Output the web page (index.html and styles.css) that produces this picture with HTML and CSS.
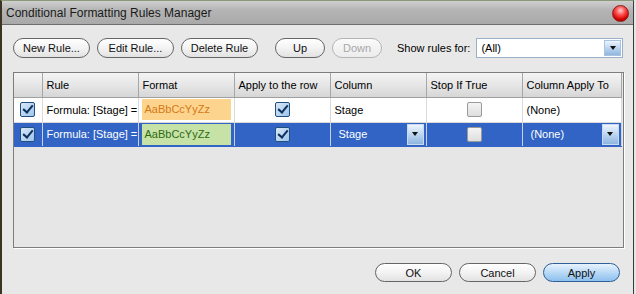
FILE: index.html
```html
<!DOCTYPE html>
<html lang="en">
<head>
  <meta charset="UTF-8">
  <title>Conditional Formatting Rules Manager</title>
  <link rel="stylesheet" href="styles.css">
</head>
<body>
  <div class="window">
    <div class="titlebar">
      <span class="title">Conditional Formatting Rules Manager</span>
      <span class="close"></span>
    </div>

    <div class="content">
      <!-- top toolbar -->
      <div class="toolbar">
        <button class="btn">New Rule...</button>
        <button class="btn">Edit Rule...</button>
        <button class="btn">Delete Rule</button>
        <button class="btn btn-small up">Up</button>
        <button class="btn btn-small disabled">Down</button>
        <span class="show-label">Show rules for:</span>
        <div class="select">
          <span class="select-text">(All)</span>
          <span class="drop"><i></i></span>
        </div>
      </div>

      <!-- rules grid -->
      <div class="grid-wrap">
        <table class="grid">
          <colgroup>
            <col style="width:28px">
            <col style="width:96px">
            <col style="width:96px">
            <col style="width:96px">
            <col style="width:96px">
            <col style="width:96px">
            <col style="width:99px">
          </colgroup>
          <thead>
            <tr>
              <th></th>
              <th>Rule</th>
              <th>Format</th>
              <th>Apply to the row</th>
              <th>Column</th>
              <th>Stop If True</th>
              <th>Column Apply To</th>
            </tr>
          </thead>
          <tbody>
            <tr class="row">
              <td class="center"><span class="check on"></span></td>
              <td class="rule">Formula: [Stage] =</td>
              <td class="fmt"><span class="sample orange">AaBbCcYyZz</span></td>
              <td class="center"><span class="check on"></span></td>
              <td>Stage</td>
              <td class="center"><span class="check"></span></td>
              <td>(None)</td>
            </tr>
            <tr class="row selected">
              <td class="center"><span class="check on"></span></td>
              <td class="rule">Formula: [Stage] =</td>
              <td class="fmt"><span class="sample green">AaBbCcYyZz</span></td>
              <td class="center"><span class="check on"></span></td>
              <td class="combo"><div class="combo-box"><span>Stage</span><span class="drop"><i></i></span></div></td>
              <td class="center"><span class="check"></span></td>
              <td class="combo"><div class="combo-box"><span>(None)</span><span class="drop"><i></i></span></div></td>
            </tr>
          </tbody>
        </table>
      </div>

      <!-- dialog buttons -->
      <div class="footer">
        <button class="btn">OK</button>
        <button class="btn">Cancel</button>
        <button class="btn primary">Apply</button>
      </div>
    </div>
  </div>
</body>
</html>
```

FILE: styles.css
```css
* {
  box-sizing: border-box;
}
body {
  margin: 0;
  background: #e6e6e6;
  font-family: 'Liberation Sans', Arial, sans-serif;
  font-size: 11px;
  color: #000;
  overflow: hidden;
}
.window {
  width: 634px;
  height: 294px;
  background: #e8e8e8;
  border-left: 2px solid #3d3322;
  border-right: 1px solid #3c3c3c;
  border-top: 1px solid #8a9a78;
}
.titlebar {
  height: 24px;
  display: flex;
  align-items: center;
  justify-content: space-between;
  padding: 0 4px 0 4px;
  background: linear-gradient(to bottom, #cfcfcf, #b4b4b4 40%, #a9a9a9);
  border-bottom: 1px solid #6e6e6e;
}
.title {
  font-size: 12px;
  color: #1a1a1a;
}
.close {
  width: 17px;
  height: 17px;
  border-radius: 50%;
  background: radial-gradient(circle at 50% 30%, #ffd0d0 0, #ff5050 35%, #d00000 70%, #900000 100%);
  border: 1px solid #8a2020;
  margin-top: 2px;
}
.content {
  padding: 13px 0 0 11px;
}
.toolbar {
  display: flex;
  align-items: center;
  height: 20px;
}
.btn {
  font-family: inherit;
  font-size: 11px;
  color: #111;
  height: 20px;
  width: 77px;
  margin-right: 7px;
  padding: 0;
  border: 1px solid #666;
  border-radius: 10px;
  background: linear-gradient(to bottom, #ffffff, #f3f3f3 50%, #e2e2e2);
}
.btn-small {
  width: 50px;
}
.btn.up {
  margin-left: 10px;
}
.btn.disabled {
  color: #a8a8a8;
  border-color: #b4b4b4;
  background: linear-gradient(to bottom, #fafafa, #ececec);
}
.show-label {
  margin-left: 8px;
  margin-right: 6px;
}
.select {
  width: 147px;
  height: 20px;
  background: #fff;
  border: 1px solid #9ab0c8;
  display: flex;
  align-items: center;
  justify-content: space-between;
  padding: 0 1px 0 4px;
}
.drop {
  width: 17px;
  height: 16px;
  background: linear-gradient(to bottom, #eef5fd, #b7d2ee 55%, #8fb6e0);
  border: 1px solid #a8c2e0;
  display: flex;
  align-items: center;
  justify-content: center;
}
.drop i {
  width: 0;
  height: 0;
  border-left: 3px solid transparent;
  border-right: 3px solid transparent;
  border-top: 4px solid #111;
}
.grid-wrap {
  margin-top: 14px;
  width: 611px;
  height: 176px;
  border: 1px solid #7d7d7d;
  box-shadow: 1px 1px 0 #ffffff;
  background: #e6e6e6;
}
.grid {
  border-collapse: collapse;
  table-layout: fixed;
  width: 607px;
}
.grid th {
  height: 24px;
  text-align: left;
  font-weight: normal;
  padding: 0 4px;
  background: linear-gradient(to bottom, #f4f4f4, #e6e6e6 50%, #d6d6d6);
  border-right: 1px solid #a6a6a6;
  border-bottom: 1px solid #a0a0a0;
  white-space: nowrap;
  overflow: hidden;
}
.grid td {
  height: 25px;
  padding: 0 4px;
  background: #fff;
  border-right: 1px solid #dadada;
  border-bottom: 1px solid #dadada;
  white-space: nowrap;
  overflow: hidden;
}
.grid td.center {
  text-align: center;
  padding: 0;
}
.grid td.fmt {
  padding: 1px 3px;
}
.sample {
  display: block;
  height: 21px;
  line-height: 21px;
  padding-left: 3px;
}
.sample.orange {
  background: #fdd48d;
  color: #d47818;
}
.sample.green {
  background: #c6e2a6;
  color: #2e6a14;
}
.row.selected td {
  height: 24px;
  background: #3164c4;
  color: #fff;
  border-right: 1px solid #c6d2ea;
  border-bottom: 1px solid #3164c4;
}
.check {
  display: inline-block;
  vertical-align: middle;
  width: 15px;
  height: 15px;
  border: 1px solid #9a9a9a;
  border-radius: 2px;
  background: linear-gradient(to bottom, #f4f4f4, #dedede);
}
.check.on {
  border-color: #22507e;
  background: linear-gradient(135deg, #d8e8f8, #9ec4ea);
  position: relative;
}
.check.on::after {
  content: "";
  position: absolute;
  left: 4px;
  top: 0px;
  width: 4px;
  height: 8px;
  border-right: 2px solid #0c2f5c;
  border-bottom: 2px solid #0c2f5c;
  transform: rotate(40deg);
}
.grid td.combo {
  padding: 0 2px 0 8px;
}
.combo-box {
  display: flex;
  align-items: center;
  justify-content: space-between;
  height: 21px;
}
.combo-box .drop {
  height: 21px;
  border-color: #c8dbf0;
}
.footer {
  margin-top: 15px;
  width: 607px;
  display: flex;
  justify-content: flex-end;
}
.footer .btn {
  height: 19px;
  margin-right: 0;
  margin-left: 7px;
}
.btn.primary {
  border-color: #2f5f96;
  background: linear-gradient(to bottom, #e8f3fd, #b9d9f6 50%, #8cc0ee);
}
```
